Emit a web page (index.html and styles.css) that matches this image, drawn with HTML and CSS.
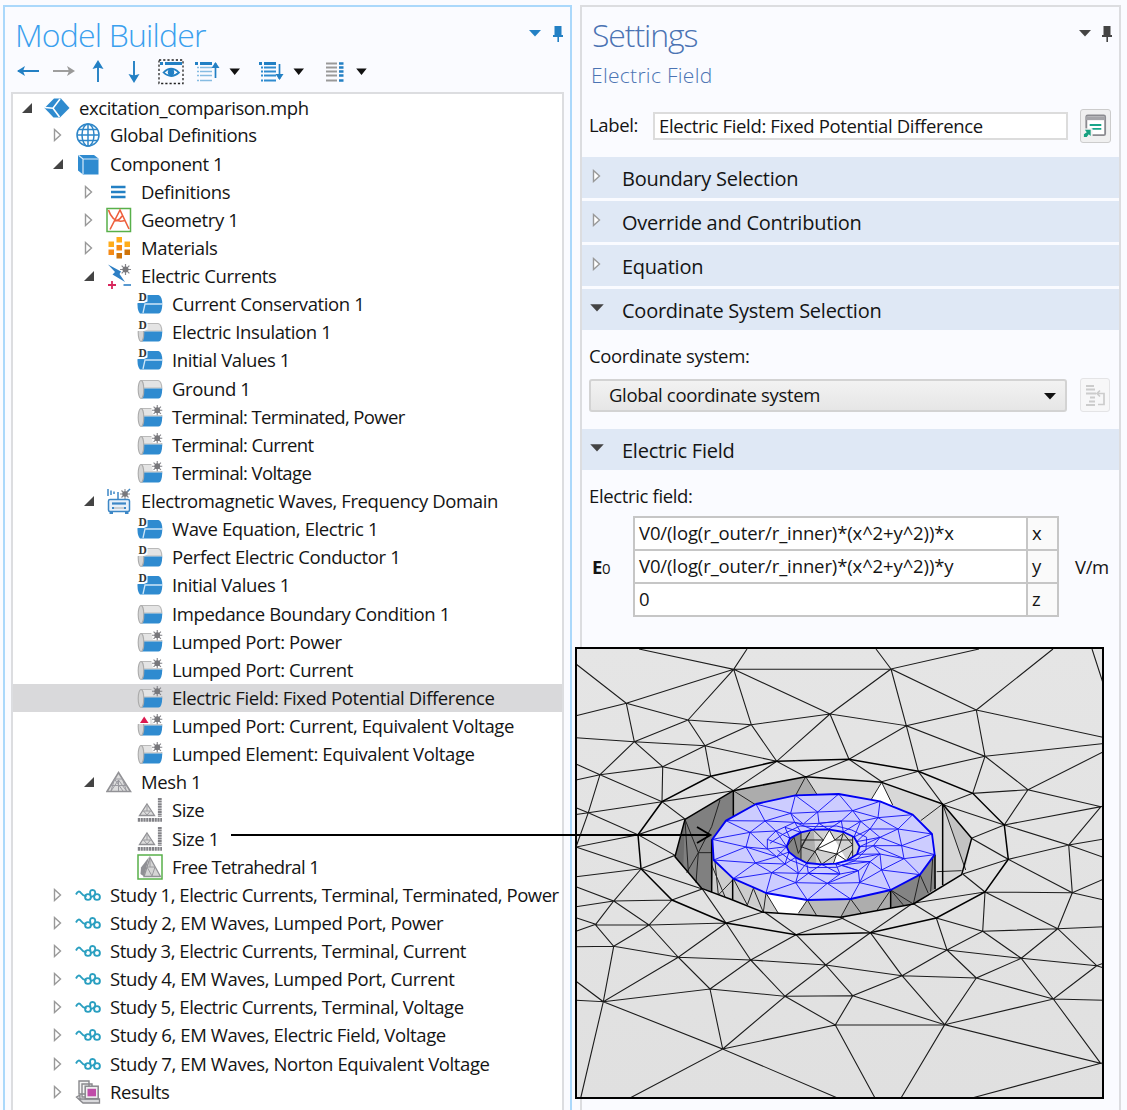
FILE: index.html
```html
<!DOCTYPE html>
<html lang="en">
<head>
<meta charset="utf-8">
<title>Model Builder</title>
<link rel="stylesheet" href="styles.css">
</head>
<body>
<svg class="defs" aria-hidden="true">
  <defs>
    <symbol id="open" viewBox="0 0 12 12"><path d="M11 1V11H1Z" fill="#444"/></symbol>
    <symbol id="closed" viewBox="0 0 12 14"><path d="M2.5 1.5V12.5L8.5 7Z" fill="#fff" stroke="#999" stroke-width="1.4"/></symbol>
    <symbol id="down" viewBox="0 0 12 8"><path d="M0 1H12L6 7.5Z" fill="currentColor"/></symbol>
    <symbol id="pin" viewBox="0 0 12 18"><path d="M2.500 1H9.500V10H11V12H7V17H5.400V12H1V10H2.500Z" fill="currentColor"/></symbol>
    <symbol id="star" viewBox="0 0 12 12"><path d="M6 0V12M0 6H12M1.800 1.800L10.200 10.200M10.200 1.800L1.800 10.200" stroke="#85858a" stroke-width="1.3"/><circle cx="6" cy="6" r="3.300" fill="#77777b"/></symbol>
    <symbol id="root" viewBox="0 0 26 26"><path d="M.5 13L10 3.500H17L25.500 13L16 22.500H9.500Z" fill="#2f8bcf"/><path d="M1 12.500L9 13.200L16 4M9 13.200L15.500 22" fill="none" stroke="#fff" stroke-width="1.600"/></symbol>
    <symbol id="globe" viewBox="0 0 26 26"><g fill="none" stroke="#2e86c8" stroke-width="1.500"><circle cx="13" cy="13" r="11"/><ellipse cx="13" cy="13" rx="6" ry="11"/><path d="M13 2V24M2 13H24M4 7.500H22M4 18.500H22"/></g></symbol>
    <symbol id="component" viewBox="0 0 26 26"><path d="M3 4H19L23.500 7.500V23.500H8L3 19.500Z" fill="#2f8bd0"/><path d="M3.500 4.300L8 8H23.500M8 8V23" fill="none" stroke="#d9ecfa" stroke-width="1.200"/></symbol>
    <symbol id="defin" viewBox="0 0 26 26"><path d="M5 8H19.500M5 13H19.500M5 18H19.500" stroke="#2380c4" stroke-width="2.600"/></symbol>
    <symbol id="geom" viewBox="0 0 26 26"><rect x="1" y="1.500" width="23.500" height="23" fill="#fff" stroke="#58b04a" stroke-width="1.500"/><path d="M4 22.500L14 3L23 22M2.500 3Q7 17 19 13.500M8 14Q13 14 16 9" fill="none" stroke="#ee5f3c" stroke-width="1.600"/></symbol>
    <symbol id="mater" viewBox="0 0 26 26"><path d="M10.500 2H16V7.500H10.500ZM2.500 6.500H8V12H2.500ZM18.500 6.500H24V12H18.500Z" fill="#ffac1a"/><path d="M10.500 10H16V15.500H10.500ZM2.500 14.500H8V20H2.500Z" fill="#f58a16"/><path d="M10.500 18H16V23.500H10.500ZM18.500 14.500H24V20H18.500Z" fill="#cf7409"/></symbol>
    <symbol id="ec" viewBox="0 0 26 26"><path d="M2 1.500L15 8.500L13.500 11L19 19L6.500 11.500L9 9Z" fill="#2e7fc4"/><use href="#star" x="14" y="1" width="11" height="11"/><path d="M2 22H10M6 18V26" stroke="#d8275c" stroke-width="1.800"/><path d="M17.500 22H25" stroke="#2e7fc4" stroke-width="1.600"/></symbol>
    <symbol id="emw" viewBox="0 0 26 26"><path d="M2 1V8M5 2.500V7M8 3.500V6M12 4V12M24 1L20 5" stroke="#3c87c6" stroke-width="1.500"/><use href="#star" x="14" y="1" width="10" height="10"/><rect x="2.500" y="11.500" width="21" height="12" rx="1.500" fill="#e8f1fa" stroke="#3c87c6" stroke-width="1.500"/><path d="M6 15.500H20" stroke="#3c87c6" stroke-width="2.200"/><path d="M6 20H8M18 20H20M3.500 25H7M19 25H22.500" stroke="#3c87c6" stroke-width="1.800"/><path d="M8 20H18" stroke="#aaa"/></symbol>
    <symbol id="cylg" viewBox="0 0 26 26"><path d="M4 4.500H21Q24.500 5 24.800 12H4Z" fill="#e4e4e4" stroke="#b9b9b9" stroke-width="1.200"/><path d="M5 12.500H25.300Q25 22.500 21.500 22.500H5Z" fill="#2f8bd0"/><ellipse cx="4" cy="13.500" rx="2.800" ry="9" fill="#d5d5d5" stroke="#aaa" stroke-width="1.100"/></symbol>
    <symbol id="cylb" viewBox="0 0 26 26"><path d="M3 4H21.500Q25.300 5 25.300 13.500Q25 22.500 21.500 22.500H3Q.5 20 .5 13.500Q.8 5 3 4Z" fill="#2f8bd0"/><path d="M6 22L8 13H25.500" fill="none" stroke="#cfe6f7" stroke-width="1.300"/></symbol>
    <symbol id="dd" viewBox="0 0 26 26"><path d="M0 1H10.500V10.500L7 12H0Z" fill="#fff"/><text x="1.500" y="10.300" font-family="Liberation Serif, serif" font-weight="700" font-size="11.500" fill="#333">D</text></symbol>
    <symbol id="cyls" viewBox="0 0 26 26"><use href="#cylg"/><path d="M14 2.500H26V11H16Z" class="star-bg"/><use href="#star" x="15" y="1" width="10.500" height="10.500"/></symbol>
    <symbol id="cylr" viewBox="0 0 26 26"><use href="#cyls"/><path d="M0 2H13V11H0Z" fill="#fff"/><path d="M7.200 3.500L11.500 10H3Z" fill="#dc1a50"/></symbol>
    <symbol id="mesh" viewBox="0 0 26 26"><path d="M12.500 3.500L24.500 22.500H1Z" fill="#ddd" stroke="#929296" stroke-width="1.600"/><path d="M8.500 10H16.500L20.500 22L12.500 11L5 22L8.500 10L17 22M5 16.500H20.500M12.500 11V22" fill="none" stroke="#9a9aa0"/></symbol>
    <symbol id="size" viewBox="0 0 26 26"><path d="M10 7L17.500 18.500H2.500Z" fill="#ddd" stroke="#909094" stroke-width="1.300"/><path d="M6.500 14H13.500L10 18L6.500 14M10 9V14" fill="none" stroke="#9a9a9e"/><path d="M22.800 1V20" stroke="#828287" stroke-width="3.800" stroke-dasharray="2 .6"/><path d="M.8 22.800H25" stroke="#828287" stroke-width="3.800" stroke-dasharray="2.200 .6"/></symbol>
    <symbol id="tet" viewBox="0 0 26 26"><rect x="1" y="1" width="24" height="24" fill="#fff" stroke="#58b04a" stroke-width="1.500"/><path d="M12 3L4 13.500L3.500 20L7 22.500Z" fill="#8f8f94"/><path d="M13 3.500L23.500 22.500H7Z" fill="#d5d5d5" stroke="#929296" stroke-width="1.300"/><path d="M10 13H18L15 22L10 13M13 5V13" fill="none" stroke="#9a9a9e"/></symbol>
    <symbol id="study" viewBox="0 0 26 26"><g fill="none" stroke="#2a9fc0" stroke-width="1.900"><path d="M1 12.500Q3.500 7.500 6 11T11.500 14"/><circle cx="13" cy="15" r="2.900"/><circle cx="22" cy="15" r="2.900"/><path d="M15.500 13Q14 8 17.500 8Q21 8 20 12.500Q18 15 15.800 15"/></g></symbol>
    <symbol id="results" viewBox="0 0 26 26"><path d="M1.500 18L5 16V20H24.500V24H8Z" fill="#d9d9dc" stroke="#88888c" stroke-width="1.300"/><path d="M4 2H14V15H4ZM7 5H17V18H7Z" fill="#f4f4f4" stroke="#88888c" stroke-width="1.400"/><rect x="10.200" y="7.200" width="13" height="12.500" fill="#eee" stroke="#88888c" stroke-width="1.500"/><rect x="12.500" y="9.800" width="8.500" height="7.500" fill="#bf4ba8"/></symbol>
  </defs>
</svg>

<main class="workspace">
  <section class="panel builder">
    <header class="panel-head">
      <h1>Model Builder</h1>
      <div class="head-tools"><svg class="caret"><use href="#down"/></svg><svg class="pin"><use href="#pin"/></svg></div>
    </header>
    <svg class="toolbar" viewBox="0 0 370 28">
      <g fill="none" stroke="#2380c4" stroke-width="1.900">
        <path d="M7 14H28M87 25V5M123 4V24"/>
        <path stroke="#999" d="M42 14H62"/>
      </g>
      <path d="M6 14L14 9L12 14L14 19ZM87 3L81.500 12L87 10.500L92.500 12ZM123 26L117.500 17L123 18.500L128.500 17Z" fill="#2380c4"/>
      <path d="M64 14L56 9L58 14L56 19Z" fill="#999"/>
      <rect x="148" y="3" width="24" height="23.500" fill="none" stroke="#222" stroke-width="1.300" stroke-dasharray="2.200 2"/>
      <path d="M149 6.500H152M154 6.500H171" stroke="#2380c4" stroke-width="3"/>
      <path d="M152.500 15.500Q160 8 168 15.500Q160 22.500 152.500 15.500Z" fill="#fff" stroke="#2380c4" stroke-width="1.700"/><circle cx="160" cy="15.200" r="3.200" fill="#2380c4"/>
      <path d="M184 6.500H187M189 6.500H201M248 6.500H251M253 6.500H265" stroke="#2380c4" stroke-width="3"/>
      <path d="M186 10.500H188M189 10.500H201M186 14.500H188M189 14.500H201M186 18.500H188M189 18.500H201M186 23.500H188M189 23.500H201" stroke="#86bce2" stroke-width="1.700"/>
      <path d="M250 10.500H252M253 10.500H265M250 14.500H252M253 14.500H265M250 18.500H252M253 18.500H265M250 23.500H252M253 23.500H265" stroke="#2f8bcf" stroke-width="1.800"/>
      <path d="M204.500 21V6M268.500 7V22" stroke="#2380c4" stroke-width="1.700"/><path d="M204.500 5L200.500 11H208.500ZM268.500 23L264.500 17H272.500Z" fill="#2380c4"/>
      <path d="M315 6.500H326M315 10.500H326M315 14.500H326M315 18.500H326M315 23.500H326" stroke="#999" stroke-width="2"/>
      <path d="M328 6.500H332.500M328 10.500H332.500M328 14.500H332.500M328 18.500H332.500M328 23.500H332.500" stroke="#2380c4" stroke-width="2.600"/>
      <path d="M218.500 11.500H229L223.700 18ZM282.500 11.500H293L287.700 18ZM345.200 11.500H355.700L350.500 18Z" fill="#111"/>
    </svg>
    <ul class="tree">
      <li class="l0"><svg class="tw"><use href="#open"/></svg><svg class="ic"><use href="#root"/></svg><span>excitation_comparison.mph</span></li>
      <li class="l1"><svg class="tw"><use href="#closed"/></svg><svg class="ic"><use href="#globe"/></svg><span>Global Definitions</span></li>
      <li class="l1"><svg class="tw"><use href="#open"/></svg><svg class="ic"><use href="#component"/></svg><span>Component 1</span></li>
      <li class="l2"><svg class="tw"><use href="#closed"/></svg><svg class="ic"><use href="#defin"/></svg><span>Definitions</span></li>
      <li class="l2"><svg class="tw"><use href="#closed"/></svg><svg class="ic"><use href="#geom"/></svg><span>Geometry 1</span></li>
      <li class="l2"><svg class="tw"><use href="#closed"/></svg><svg class="ic"><use href="#mater"/></svg><span>Materials</span></li>
      <li class="l2"><svg class="tw"><use href="#open"/></svg><svg class="ic"><use href="#ec"/></svg><span>Electric Currents</span></li>
      <li class="l3"><svg class="ic"><use href="#cylb"/><use href="#dd"/></svg><span>Current Conservation 1</span></li>
      <li class="l3"><svg class="ic"><use href="#cylg"/><use href="#dd"/></svg><span>Electric Insulation 1</span></li>
      <li class="l3"><svg class="ic"><use href="#cylb"/><use href="#dd"/></svg><span>Initial Values 1</span></li>
      <li class="l3"><svg class="ic"><use href="#cylg"/></svg><span>Ground 1</span></li>
      <li class="l3 tight"><svg class="ic"><use href="#cyls"/></svg><span>Terminal: Terminated, Power</span></li>
      <li class="l3 tight"><svg class="ic"><use href="#cyls"/></svg><span>Terminal: Current</span></li>
      <li class="l3 tight"><svg class="ic"><use href="#cyls"/></svg><span>Terminal: Voltage</span></li>
      <li class="l2"><svg class="tw"><use href="#open"/></svg><svg class="ic"><use href="#emw"/></svg><span>Electromagnetic Waves, Frequency Domain</span></li>
      <li class="l3"><svg class="ic"><use href="#cylb"/><use href="#dd"/></svg><span>Wave Equation, Electric 1</span></li>
      <li class="l3"><svg class="ic"><use href="#cylg"/><use href="#dd"/></svg><span>Perfect Electric Conductor 1</span></li>
      <li class="l3"><svg class="ic"><use href="#cylb"/><use href="#dd"/></svg><span>Initial Values 1</span></li>
      <li class="l3"><svg class="ic"><use href="#cylg"/></svg><span>Impedance Boundary Condition 1</span></li>
      <li class="l3"><svg class="ic"><use href="#cyls"/></svg><span>Lumped Port: Power</span></li>
      <li class="l3"><svg class="ic"><use href="#cyls"/></svg><span>Lumped Port: Current</span></li>
      <li class="l3 selected"><svg class="ic"><use href="#cyls"/></svg><span>Electric Field: Fixed Potential Difference</span></li>
      <li class="l3"><svg class="ic"><use href="#cylr"/></svg><span>Lumped Port: Current, Equivalent Voltage</span></li>
      <li class="l3"><svg class="ic"><use href="#cyls"/></svg><span>Lumped Element: Equivalent Voltage</span></li>
      <li class="l2"><svg class="tw"><use href="#open"/></svg><svg class="ic"><use href="#mesh"/></svg><span>Mesh 1</span></li>
      <li class="l3"><svg class="ic"><use href="#size"/></svg><span>Size</span></li>
      <li class="l3"><svg class="ic"><use href="#size"/></svg><span>Size 1</span></li>
      <li class="l3 tight"><svg class="ic"><use href="#tet"/></svg><span>Free Tetrahedral 1</span></li>
      <li class="l1 study"><svg class="tw"><use href="#closed"/></svg><svg class="ic"><use href="#study"/></svg><span>Study 1, Electric Currents, Terminal, Terminated, Power</span></li>
      <li class="l1"><svg class="tw"><use href="#closed"/></svg><svg class="ic"><use href="#study"/></svg><span>Study 2, EM Waves, Lumped Port, Power</span></li>
      <li class="l1 study"><svg class="tw"><use href="#closed"/></svg><svg class="ic"><use href="#study"/></svg><span>Study 3, Electric Currents, Terminal, Current</span></li>
      <li class="l1"><svg class="tw"><use href="#closed"/></svg><svg class="ic"><use href="#study"/></svg><span>Study 4, EM Waves, Lumped Port, Current</span></li>
      <li class="l1 study"><svg class="tw"><use href="#closed"/></svg><svg class="ic"><use href="#study"/></svg><span>Study 5, Electric Currents, Terminal, Voltage</span></li>
      <li class="l1"><svg class="tw"><use href="#closed"/></svg><svg class="ic"><use href="#study"/></svg><span>Study 6, EM Waves, Electric Field, Voltage</span></li>
      <li class="l1"><svg class="tw"><use href="#closed"/></svg><svg class="ic"><use href="#study"/></svg><span>Study 7, EM Waves, Norton Equivalent Voltage</span></li>
      <li class="l1"><svg class="tw"><use href="#closed"/></svg><svg class="ic"><use href="#results"/></svg><span>Results</span></li>
    </ul>
  </section>

  <section class="panel settings">
    <header class="panel-head">
      <h1>Settings</h1>
      <div class="head-tools"><svg class="caret"><use href="#down"/></svg><svg class="pin"><use href="#pin"/></svg></div>
    </header>
    <h2>Electric Field</h2>
    <div class="label-row">
      <span class="label">Label:</span>
      <div class="field">Electric Field: Fixed Potential Difference</div>
      <div class="tool-button"><svg viewBox="0 0 30 32"><rect x="5.500" y="5.500" width="19.500" height="20.500" rx="1.500" fill="#fff" stroke="#8b8b90" stroke-width="1.900"/><path d="M5 8.500H25" stroke="#a5a5a9" stroke-width="4"/><path d="M9 15.500H21M11 19.500H21" stroke="#17a589" stroke-width="1.900"/><path d="M1 19H12V29H1Z" fill="#f0f0f0"/><path d="M3 28V25L6 23L4 20.500H10V27L8 25L6 28Z" fill="#17a07f"/></svg></div>
    </div>
    <h3><svg class="st"><use href="#closed"/></svg>Boundary Selection</h3>
    <h3><svg class="st"><use href="#closed"/></svg>Override and Contribution</h3>
    <h3><svg class="st"><use href="#closed"/></svg>Equation</h3>
    <h3><svg class="sd"><use href="#down"/></svg>Coordinate System Selection</h3>
    <div class="caption">Coordinate system:</div>
    <div class="combo-row">
      <div class="combo"><span>Global coordinate system</span><svg class="caret"><use href="#down"/></svg></div>
      <div class="tool-button disabled"><svg viewBox="0 0 28 32"><path d="M5 7H13M5 10.500H14M5 14.500H15M9 18.500H14M8 22.500H14M5 26H14" stroke="#ccc" stroke-width="2"/><path d="M17 14.500H23V25.500H17M19 11.500L16 14.500L19 17.500" fill="none" stroke="#ccc" stroke-width="1.700"/></svg></div>
    </div>
    <h3><svg class="sd"><use href="#down"/></svg>Electric Field</h3>
    <div class="caption second">Electric field:</div>
    <div class="vector">
      <div class="symbol"><b>E</b><small>0</small></div>
      <div class="grid">
        <div>V0/(log(r_outer/r_inner)*(x^2+y^2))*x</div><div>x</div>
        <div>V0/(log(r_outer/r_inner)*(x^2+y^2))*y</div><div>y</div>
        <div>0</div><div>z</div>
      </div>
      <div class="unit">V/m</div>
    </div>
  </section>
</main>

<svg class="mesh-view" viewBox="575 647 529 452">
  <defs>
    <linearGradient id="plate" x1="0" y1="0" x2="0" y2="1"><stop offset="0" stop-color="#e5e5e5"/><stop offset="1" stop-color="#e0e0e0"/></linearGradient>
    <clipPath id="hole"><path d="M350 290L360 265L393 247L430 239L475 238L520 246L552 261L569 290L561 313L530 332L497 341L455 343L410 339L377 322L357 306Z"/></clipPath>
  </defs>
  <rect x="575" y="647" width="529" height="452" fill="url(#plate)"/>
  <!-- plate triangulation -->
  <g fill="none" stroke="#1c1c1c" stroke-width="1.1">
    <path d="M639 649L733.700 669.300L747 649M891 669.300H733.700L626.300 703.300M688 720L733.700 669.300L751.300 724.700M733.700 669.300L830 714M576 664L626.300 703.300L576 715.700M634.300 741.700L626.300 703.300L688 720L751.300 724.700L830 714M688 720L705 745.700M688 720L634.300 741.700M705 745.700L751.300 724.700L776.700 761.300L830 714L849 759.300M576 737.700L634.300 741.700L705 745.700L776.700 761.300M634.300 741.700L662.700 766.700M634.300 741.700L600 774.700M705 745.700L710.700 776.300L662.700 766.700L705 745.700M600 774.700L662.700 766.700L662 801.700L600 774.700L576 764M600 774.700L576 780M600 774.700L588.300 812.700L576 847M576 807.700L588.300 812.700L576 814.500M588.300 812.700L662 801.700M588.300 812.700L638 834.700L576 847L641 868.700L576 876.700"/>
    <path d="M710.700 776.300L733.300 790.700L776.700 761.300L805.700 777L849 759.300M733.300 790.700L662 801.700L684.700 818.700L638 834.700L675 855.300L641 868.700L702.300 889"/>
    <path d="M876 649L891 669L979 649M830 714L891 669L976.300 710M891 669L906.300 725.700L830 714M1053 649L976.300 710L1104 737.500M976.300 710L906.300 725.700L849 759.300L881.700 781.700M976.300 710L985 756.300L906.300 725.700L918.300 771.300L985 756.300L1104 743.500M985 756.300L972.700 793.300L1028 789.700L985 756.300M881.700 781.700L918.300 771.300L943 804.700L972.700 793.300M1104 751.500L1028 789.700L1101 806.700L1104 806M1028 789.700L1004.300 825L1101 806.700L1068.700 845L1004.300 825L943 804.700M1004.300 825L971.300 838.300L1008.300 859.300L1068.700 845L1104 839M1068.700 845L1104 857.500M1068.700 845L1072.300 892.700L1008.300 859.300L962.700 874M1092 649L1104 686"/>
    <path d="M641 869L613.700 901L576 886.700M576 906.700L613.700 901L672 900L702.300 889L726 923L764 911.700L796 934.700L844 917.700M595.700 924.300L613.700 901L649 925L672 900M576 917.700L595.700 924.300L576 931.300M649 925H595.700L613.700 946.300L649 925L726 923L678.300 957.300L649 925M726 923L750.700 960L796 934.700L825.700 965L870.300 932.700M576 946.700L613.700 946.300L678.300 957.300L750.700 960L825.700 965L902 975.700M613.700 946.300L603.300 1001.700L678.300 957.300L710 989L750.700 960L785 996.300L825.700 965L852.700 995.700M576 981.300L603.300 1001.700L576 1000.300M603.300 1001.700L710 989L722.700 1049L603.300 1001.700L580.700 1098M710 989L785 996.300L722.700 1049L835.300 1025L785 996.300L852.700 995.700L835.300 1025H944.700M835.300 1025L875 1098M630 1098L722.700 1049L837.500 1098"/>
    <path d="M962.700 874L985 892L912.700 903.300L936.300 918L982.700 931.300L985 892L1072.300 892.700L1104 879M1072.300 892.700L1104 900M1072.300 892.700L1057.700 928.700L985 892M912.700 903.300L870.300 932.700L841 917.700M936.300 918L947 950L982.700 931.300L1057.700 928.700L1104 926.700M982.700 931.300L1021.300 958.300L1057.700 928.700L1096.700 965.700L1104 963M1104 968L1096.700 965.700L1021.300 958.300L947 950L870.300 932.700L902 975.700L947 950L976.300 978L1021.300 958.300L1053.300 999L1096.700 965.700M902 975.700L976.300 978L1053.300 999L1104 1000.300M902 975.700L852.700 995.700L944.700 1024.700L902 975.700M976.300 978L944.700 1024.700L1053.300 999L1100.700 1063.300L944.700 1024.700L901 1098M1104 1062.500L1100.700 1063.300L972 1098"/>
  </g>
  <path d="M776.700 761.300L710.700 776.300L662 801.700L638 834.700L641 868.700L672 900L726 923L796 934.700L870.300 932.700L936.300 918L985 892L1008.300 859.300L1004.300 825L972.700 793.300L918.300 771.300L849 759.300Z" fill="none" stroke="#000" stroke-width="1.500"/>
  <!-- recess and raised ring, drawn on a three-times finer grid -->
  <g transform="translate(670 750) scale(.33333)" stroke-linejoin="round">
    <path d="M407 80L190 122L45 208L15 320L95 415L188 450L280 487L512 502L730 462L875 374L905 265L818 162L635 97Z" fill="#d8d8d8"/>
    <path d="M190 122L45 208L15 320L95 415L130 430V268L190 195Z" fill="#808080"/>
    <path d="M45 208L15 320L40 352Z" fill="#6c6c6c"/>
    <path d="M190 122L407 80L440 135L376 140L258 165L190 200Z" fill="#acacac"/>
    <path d="M635 97L600 152L668 168Z" fill="#fff"/>
    <path d="M818 162L885 360L818 405Z" fill="#d6d6d6"/><path d="M818 162L905 265L885 360Z" fill="#c3c3c3"/>
    <path d="M131 330L190 386L288 429L325 490L188 450L125 425Z" fill="#cdcdcd"/>
    <path d="M288 429L412 450L385 492L325 490Z" fill="#fff"/>
    <path d="M412 450L542 447L512 502L385 492Z" fill="#bbb"/>
    <path d="M542 447L662 420V473L512 502Z" fill="#adadad"/>
    <path d="M662 420L750 374L794 314L798 415L730 462L662 473Z" fill="#848484"/>
    <g fill="none" stroke="#222" stroke-width="3">
      <path d="M45 208L85 308L50 368M45 208L55 365M150 150L125 230L85 308H127M85 308L78 398M407 80L376 138M407 80L440 132M190 122L258 165M635 97L604 148M635 97L668 165M818 162L752 212M818 162L887 360M875 362L800 365"/>
      <path d="M135 335L145 435L188 390M125 345L165 440M190 386L232 465L250 415L280 487L288 429L325 490M412 450L385 490M412 450L440 497M542 447L512 502M542 447L575 492M662 420L620 482M662 420L700 465M750 374L730 462M750 374L775 430M788 325L782 425M662 420L730 462"/>
    </g>
    <path d="M407 80L190 122L45 208L15 320L95 415L188 450L280 487L512 502L730 462L875 374L905 265L818 162L635 97ZM190 122V200M818 162V405M188 388V450M662 420V473M125 268V425M795 314V418" fill="none" stroke="#000" stroke-width="4.500"/>
    <path fill-rule="evenodd" d="M127 268L168 212L258 162L376 136L506 132L630 154L728 194L786 252L794 314L750 374L662 420L542 447L412 450L288 429L190 386L131 330ZM350 290L357 306L377 322L410 339L455 343L497 341L530 332L561 313L569 290L552 261L520 246L475 238L430 239L393 247L360 265Z" fill="#ccf"/>
    <g clip-path="url(#hole)">
      <path d="M340 230H580V350H340Z" fill="#d2d2d2"/><path d="M340 230H393V350H340Z" fill="#858585"/><path d="M393 230H430L440 350H393Z" fill="#afafaf"/><path d="M478 235L440 298L500 312L485 345L530 330L495 270Z" fill="#fff"/>
      <path d="M393 240V330M548 250V320M350 290L372 262L385 310L420 245L393 290L435 305L460 270L430 240M460 270L410 339M460 270L478 240L495 270L440 298L500 312L520 250L495 270L548 270M500 312L548 285L520 250M500 312L490 341M500 312L530 332L548 300M435 305L455 343L500 312M393 270L460 270" fill="none" stroke="#222" stroke-width="3"/>
    </g>
    <g fill="none" stroke="#1414f5" stroke-width="2.800">
      <path d="M127 268L240 247L168 212L285 213L258 162L362 190L376 136L443 186L506 132L548 182L630 154L624 203L728 194L684 237L786 252L695 287L794 314L702 326L750 374L635 360L662 420L569 398L542 447L472 400L412 450L377 398L288 429L305 368L190 386L256 339L131 330L228 291Z"/>
      <path d="M240 247L285 213L362 190L443 186L548 182L624 203L684 237L695 287L702 326L635 360L569 398L472 400L377 398L305 368L256 339L228 291Z"/>
      <path d="M240 247L318 243L285 213L374 217L362 190L400 222L443 186L447 220L514 213L548 182L572 214L624 203L600 237L684 237L630 262L695 287L610 287L702 326L630 312L635 360L600 335L569 398L565 362L472 400L510 372L415 370L472 400M415 370L377 398L385 370L305 368L345 342L256 339L320 320L228 291L292 297L240 247"/>
      <path d="M292 268L318 243L374 217L400 222L447 220L514 213L572 214L600 237L630 262L610 287L630 312L600 335L565 362L510 372L415 370L385 370L345 342L320 320L292 297Z"/>
      <path d="M292 268L350 290L318 243L360 265L345 232L393 247L374 217L430 239L447 220L475 238L514 213L520 246L572 214L552 261L600 237L560 275L630 262L569 290L610 287L561 313L630 312L530 332L600 335L515 345L565 362L497 341L510 372L455 343L415 370L410 339L385 370L377 322L345 342L357 306L320 320L350 290L292 297"/>
      <path d="M300 280L340 252L390 228L440 230L500 228L545 240L590 262L588 300L555 332L500 352L420 353L360 330L322 300"/>
    </g>
    <path d="M127 268L168 212L258 162L376 136L506 132L630 154L728 194L786 252L794 314L750 374L662 420L542 447L412 450L288 429L190 386L131 330ZM350 290L357 306L377 322L410 339L455 343L497 341L530 332L561 313L569 290L552 261L520 246L475 238L430 239L393 247L360 265Z" fill="none" stroke="#0000f2" stroke-width="5.500"/>
  </g>
  <rect x="576" y="648" width="527" height="450" fill="none" stroke="#000" stroke-width="2"/>
</svg>
<svg class="pointer" viewBox="0 0 482 20"><path d="M0 10H479M466 2L479.500 10L466 18" fill="none" stroke="#000" stroke-width="1.800"/></svg>
</body>
</html>
```
FILE: styles.css
```css
* { box-sizing: border-box; }
body {
  position: relative;
  width: 1127px;
  height: 1110px;
  margin: 0;
  overflow: hidden;
  background: #fafbff;
  color: #141414;
  font-family: "Open Sans", "Noto Sans", sans-serif;
  font-size: 18.5px;
  letter-spacing: -0.35px;
}
svg { display: block; flex: none; }
h1, h2, h3, ul { margin: 0; padding: 0; font-weight: 400; }
.defs { position: absolute; width: 0; height: 0; }

.workspace { display: flex; gap: 8px; height: 1110px; padding: 5px 6px 0 3px; }
.panel { display: flex; flex-direction: column; border: 2px solid #dcdde0; border-bottom: 0; background: #fafbff; }
.builder { width: 569px; padding: 0 6px 0 6px; border-color: #aad8fb; }
.settings { width: 541px; }
.panel-head { display: flex; justify-content: space-between; height: 50px; padding-top: 6px; }
h1 { font-size: 32px; font-weight: 300; line-height: 44px; letter-spacing: -0.8px; }
.head-tools { display: flex; gap: 11px; padding-top: 12px; }
.caret { width: 12px; height: 8px; margin-top: 4px; }
.pin { width: 12px; height: 18px; }

.builder .panel-head { padding-left: 4px; color: #3aa0ee; }
.builder .head-tools { color: #2380c4; }
.toolbar { width: 370px; height: 28px; margin: 0 0 7px; }

.tree { flex: 1; overflow: hidden; border: 2px solid #dcdde0; border-bottom: 0; background: #fff; list-style: none; letter-spacing: -0.38px; --row-bg: #fff; }
.tree li { display: flex; align-items: center; height: 28.14px; white-space: nowrap; }
.tree li:first-child { height: 27.4px; }
.tree span { line-height: 28px; }
.tw { width: 12px; height: 14px; margin-right: 11px; }
.ic { width: 26px; height: 26px; margin-right: 9px; }
.l0 { padding-left: 8px; }
.l1 { padding-left: 39px; }
.l2 { padding-left: 70px; }
.l3 { padding-left: 124px; }
.tree .tight { letter-spacing: -0.64px; }
.tree .study { letter-spacing: -0.48px; }
.tree .selected { background: #d9d9db; --row-bg: #d9d9db; }
.star-bg { fill: var(--row-bg); }

.settings .panel-head { padding: 6px 6px 0 10px; color: #4b73b3; }
.settings h1 { letter-spacing: -1.1px; }
.settings .head-tools { gap: 10px; color: #444; }
h2 { height: 38px; padding-left: 9px; color: #4b73b3; font-size: 21px; font-weight: 300; line-height: 37px; letter-spacing: 0.3px; }
.label-row { display: flex; align-items: center; height: 62px; padding-left: 7px; }
.label { width: 64px; line-height: 24px; padding-bottom: 2px; }
.field { width: 415px; height: 28px; padding-left: 4px; border: 2px solid #dcdcdc; background: #fff; line-height: 24px; }
.tool-button { width: 31px; height: 34px; margin-left: 12px; border: 1px solid #ccc; border-radius: 3px; background: #f0f0f0; }
.disabled { width: 30px; margin: -1px 0 0 13px; border-color: #e4e4e6; background: #f7f7f8; }
h3 { display: flex; align-items: center; height: 41px; border-top: 1px solid #dfe8f5; margin-bottom: 3px; padding-left: 9px; background: #dfe8f5; font-size: 20px; letter-spacing: -0.25px; }
.st { width: 12px; height: 14px; margin: -5px 19px 0 0; }
.sd { width: 14px; height: 9px; margin: -5px 18px 0 -1px; color: #444; }
.caption { height: 46px; padding-left: 7px; line-height: 45px; }
.second { height: 43px; }
.combo-row { display: flex; height: 50px; padding-left: 7px; }
.combo { display: flex; justify-content: space-between; width: 478px; height: 33px; padding: 0 9px 0 18px; border: 2px solid #d3d3d3; border-radius: 3px; background: linear-gradient(#f2f2f2, #e6e6e6); line-height: 28px; }
.combo .caret { margin-top: 11px; color: #111; }
.vector { display: flex; align-items: center; padding-left: 10px; }
.symbol { width: 41px; }
.symbol small { font-size: 15px; }
.grid { display: grid; grid-template-columns: 391px 29px; gap: 2px; padding: 2px; background: #c6c6c6; letter-spacing: -0.12px; }
.grid div { height: 31px; padding-left: 4px; background: #fff; line-height: 30px; }
.grid div:nth-child(even) { background: #fafafa; }
.unit { margin-left: 16px; }

.mesh-view { position: absolute; left: 575px; top: 647px; width: 529px; height: 452px; }
.pointer { position: absolute; left: 231px; top: 825px; width: 482px; height: 20px; }
```
